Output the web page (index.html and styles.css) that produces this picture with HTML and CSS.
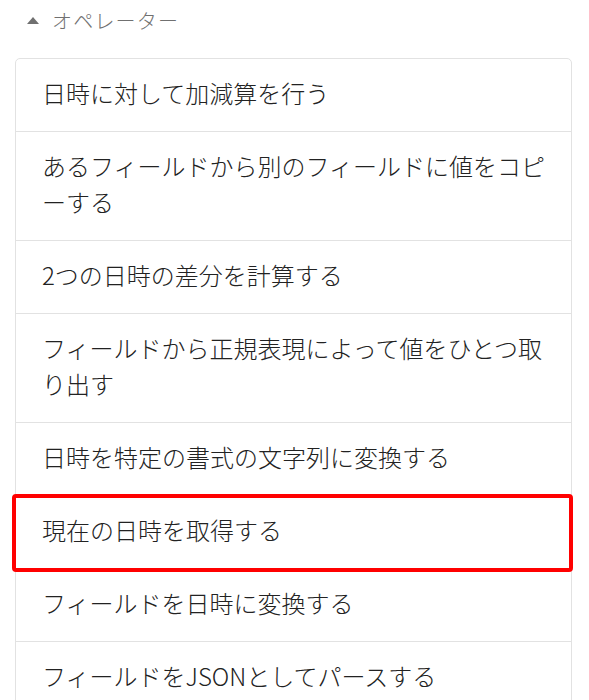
FILE: index.html
```html
<!DOCTYPE html>
<html lang="ja">
<head>
    <meta charset="UTF-8">
    <meta name="viewport" content="width=device-width, initial-scale=1.0">
    <title>オペレーター</title>
    <link rel="stylesheet" href="styles.css">
</head>
<body>
    <div class="section">
        <div class="section-head">
            <span class="caret"></span>
            <span class="section-title">オペレーター</span>
        </div>

        <ul class="op-list">
            <li class="op">日時に対して加減算を行う</li>
            <li class="op">あるフィールドから別のフィールドに値をコピーする</li>
            <li class="op">2つの日時の差分を計算する</li>
            <li class="op">フィールドから正規表現によって値をひとつ取り出す</li>
            <li class="op">日時を特定の書式の文字列に変換する</li>
            <li class="op selected">現在の日時を取得する</li>
            <li class="op">フィールドを日時に変換する</li>
            <li class="op">フィールドをJSONとしてパースする</li>
        </ul>
    </div>
</body>
</html>
```

FILE: styles.css
```css
:root {
    --text-main: #222222;
    --text-head: #707070;
    --line: #e2e2e2;
    --mark: #ff0000;
}

body {
    margin: 0;
    padding: 0 17px 0 15px;
    background: #ffffff;
    font-family: "Noto Sans CJK JP", "Noto Sans", sans-serif;
    color: var(--text-main);
    overflow: hidden;
}

.section-head {
    display: flex;
    align-items: center;
    height: 40px;
    margin-bottom: 18px;
    color: var(--text-head);
}

.caret {
    width: 0;
    height: 0;
    margin-left: 12px;
    margin-right: 13px;
    border-left: 6px solid transparent;
    border-right: 6px solid transparent;
    border-bottom: 7px solid var(--text-head);
}

.section-title {
    font-size: 20px;
    font-weight: 300;
    letter-spacing: 1.2px;
}

.op-list {
    list-style: none;
    margin: 0;
    padding: 0;
    border: 1px solid var(--line);
    border-radius: 5px;
}

.op {
    position: relative;
    padding: 16px 20px 20px 26px;
    font-size: 24px;
    font-weight: 300;
    line-height: 36px;
    border-bottom: 1px solid var(--line);
}

.op:last-child {
    border-bottom: 0;
}

/* red highlight drawn over the row */
.selected::after {
    content: "";
    position: absolute;
    top: -2px;
    left: -4px;
    right: -2px;
    bottom: -4px;
    border: 4px solid var(--mark);
    border-radius: 4px;
}
```
